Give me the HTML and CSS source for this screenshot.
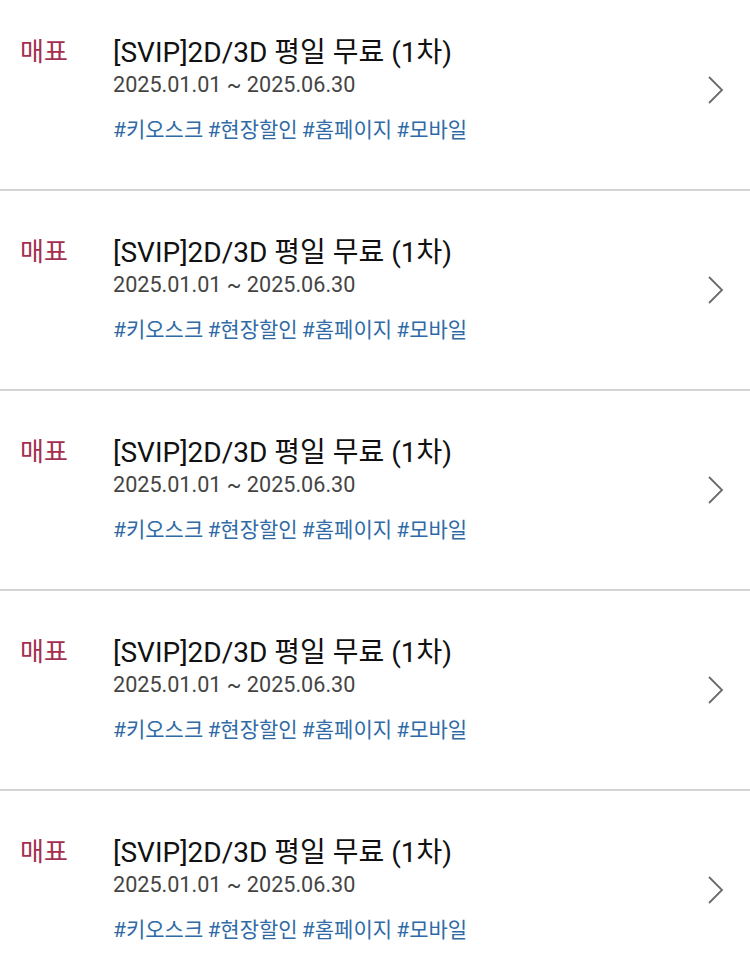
FILE: index.html
```html
<!DOCTYPE html>
<html lang="ko">
<head>
<meta charset="utf-8">
<link rel="stylesheet" href="styles.css">
</head>
<body>
<ul class="list">
  <li class="row">
    <span class="label">매표</span>
    <div class="info">
      <div class="title">[SVIP]2D/3D 평일 무료 (1차)</div>
      <div class="date">2025.01.01 ~ 2025.06.30</div>
      <div class="tags">#키오스크 #현장할인 #홈페이지 #모바일</div>
    </div>
    <svg class="chev" width="18" height="30" viewBox="0 0 18 30"><path d="M2 2 L15 15 L2 28" fill="none" stroke="#6a6a6a" stroke-width="1.8"/></svg>
  </li>
  <li class="row">
    <span class="label">매표</span>
    <div class="info">
      <div class="title">[SVIP]2D/3D 평일 무료 (1차)</div>
      <div class="date">2025.01.01 ~ 2025.06.30</div>
      <div class="tags">#키오스크 #현장할인 #홈페이지 #모바일</div>
    </div>
    <svg class="chev" width="18" height="30" viewBox="0 0 18 30"><path d="M2 2 L15 15 L2 28" fill="none" stroke="#6a6a6a" stroke-width="1.8"/></svg>
  </li>
  <li class="row">
    <span class="label">매표</span>
    <div class="info">
      <div class="title">[SVIP]2D/3D 평일 무료 (1차)</div>
      <div class="date">2025.01.01 ~ 2025.06.30</div>
      <div class="tags">#키오스크 #현장할인 #홈페이지 #모바일</div>
    </div>
    <svg class="chev" width="18" height="30" viewBox="0 0 18 30"><path d="M2 2 L15 15 L2 28" fill="none" stroke="#6a6a6a" stroke-width="1.8"/></svg>
  </li>
  <li class="row">
    <span class="label">매표</span>
    <div class="info">
      <div class="title">[SVIP]2D/3D 평일 무료 (1차)</div>
      <div class="date">2025.01.01 ~ 2025.06.30</div>
      <div class="tags">#키오스크 #현장할인 #홈페이지 #모바일</div>
    </div>
    <svg class="chev" width="18" height="30" viewBox="0 0 18 30"><path d="M2 2 L15 15 L2 28" fill="none" stroke="#6a6a6a" stroke-width="1.8"/></svg>
  </li>
  <li class="row">
    <span class="label">매표</span>
    <div class="info">
      <div class="title">[SVIP]2D/3D 평일 무료 (1차)</div>
      <div class="date">2025.01.01 ~ 2025.06.30</div>
      <div class="tags">#키오스크 #현장할인 #홈페이지 #모바일</div>
    </div>
    <svg class="chev" width="18" height="30" viewBox="0 0 18 30"><path d="M2 2 L15 15 L2 28" fill="none" stroke="#6a6a6a" stroke-width="1.8"/></svg>
  </li>
</ul>
</body>
</html>
```
FILE: styles.css
```css
html, body {
  margin: 0;
  padding: 0;
  background: #fff;
  overflow: hidden;
}
body {
  font-family: Roboto, "Noto Sans CJK KR", sans-serif;
}
.list {
  list-style: none;
  margin: -9px 0 0 0;
  padding: 0;
}
.row {
  height: 198px;
  border-bottom: 2px solid #d4d4d4;
  display: flex;
  align-items: flex-start;
  padding-left: 20px;
  box-sizing: content-box;
}
.label {
  width: 93px;
  flex: none;
  color: #a3304f;
  font-size: 26px;
  line-height: 30px;
  padding-top: 46px;
}
.info {
  flex: 1;
  padding-top: 44px;
}
.title {
  font-size: 28px;
  line-height: 36px;
  color: #111;
}
.date {
  font-size: 21.6px;
  line-height: 28px;
  color: #444;
}
.tags {
  font-size: 21px;
  line-height: 28px;
  color: #2f6aa6;
  margin-top: 17px;
  word-spacing: -1px;
}
.chev {
  flex: none;
  margin-top: 84px;
  margin-right: 25px;
}
```
